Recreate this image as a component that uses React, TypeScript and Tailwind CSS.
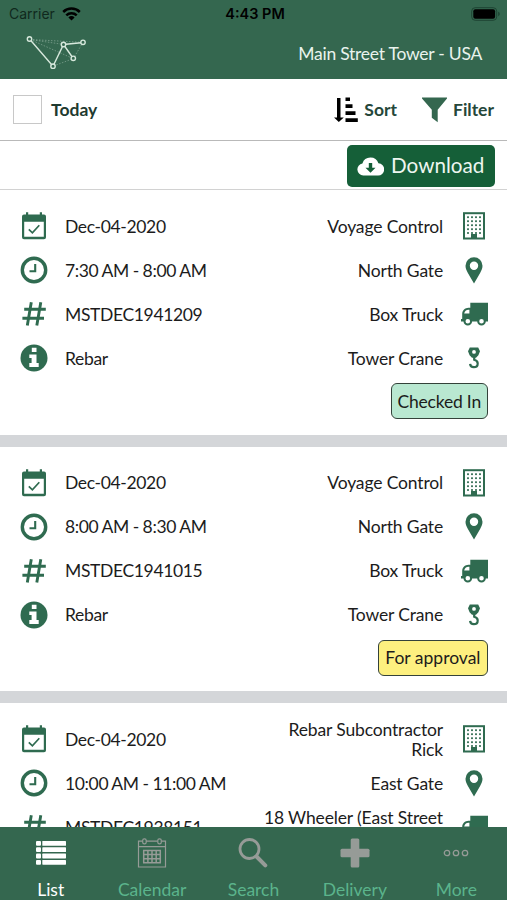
import type { ReactNode } from "react";

type Delivery = {
  date: string;
  time: string;
  code: string;
  material: string;
  company: string;
  gate: string;
  vehicle: string;
  equipment: string;
  status: "Checked In" | "For approval";
};

const DELIVERIES: Delivery[] = [
  {
    date: "Dec-04-2020",
    time: "7:30 AM - 8:00 AM",
    code: "MSTDEC1941209",
    material: "Rebar",
    company: "Voyage Control",
    gate: "North Gate",
    vehicle: "Box Truck",
    equipment: "Tower Crane",
    status: "Checked In",
  },
  {
    date: "Dec-04-2020",
    time: "8:00 AM - 8:30 AM",
    code: "MSTDEC1941015",
    material: "Rebar",
    company: "Voyage Control",
    gate: "North Gate",
    vehicle: "Box Truck",
    equipment: "Tower Crane",
    status: "For approval",
  },
  {
    date: "Dec-04-2020",
    time: "10:00 AM - 11:00 AM",
    code: "MSTDEC1938151",
    material: "Rebar",
    company: "Rebar Subcontractor Rick",
    gate: "East Gate",
    vehicle: "18 Wheeler (East Street Only)",
    equipment: "Tower Crane",
    status: "For approval",
  },
];

function CalendarCheckIcon() {
  return (
    <svg width="28" height="28" viewBox="0 0 28 28" fill="none">
      <path
        fill="currentColor"
        fillRule="evenodd"
        d="M6 .3h2.200v2.200h11.600V.3H22v2.200h2a2 2 0 0 1 2 2v20.700a2 2 0 0 1-2 2H4a2 2 0 0 1-2-2V4.500a2 2 0 0 1 2-2h2zM4.200 9.800v15h19.600v-15z"
      />
      <path d="M8.800 17.400l3.600 3.500 6.900-7.600" stroke="currentColor" strokeWidth="1.700" />
    </svg>
  );
}

function ClockIcon() {
  return (
    <svg width="28" height="28" viewBox="0 0 28 28" fill="none" stroke="currentColor">
      <circle cx="14" cy="14" r="11.700" strokeWidth="3.400" />
      <path d="M15.200 8v7.200H9.500" strokeWidth="2.100" />
    </svg>
  );
}

function HashIcon() {
  return (
    <svg width="28" height="28" viewBox="0 0 28 28" fill="none" stroke="currentColor" strokeWidth="2.900">
      <path d="M11.300 2.300L7.300 25.500M20.800 2.300l-4 23.200M4.200 9.200h21.600M2.400 18.300H24" />
    </svg>
  );
}

function InfoIcon() {
  return (
    <svg width="28" height="28" viewBox="0 0 28 28">
      <circle cx="14" cy="14" r="13.500" fill="currentColor" />
      <path fill="#fff" d="M11.800 3.800h4.700v4.300h-4.700zM9.300 10.400h7.200v8.700h2.200v3.800H9.300v-3.800h2.300v-5H9.300z" />
    </svg>
  );
}

function BuildingIcon() {
  const rows = [5.2, 9.2, 13.2, 17.2, 21];
  const cols = [5, 9, 13, 17];
  return (
    <svg width="22" height="28" viewBox="0 0 22 28">
      <rect x="1" y="1.200" width="20" height="25.300" fill="none" stroke="currentColor" strokeWidth="2" />
      {rows.map((y) =>
        cols.map((x) => <rect key={`${x}-${y}`} x={x - 0.9} y={y - 0.9} width="1.8" height="1.8" fill="currentColor" />)
      )}
      <path fill="currentColor" d="M8 22h6v5H8z" />
    </svg>
  );
}

function PinIcon() {
  return (
    <svg width="18" height="27" viewBox="0 0 18 27">
      <path
        fill="currentColor"
        fillRule="evenodd"
        d="M9 .3a8.500 8.500 0 0 1 8.500 8.500c0 2.800-1.100 4.900-2.500 7.400L9 26.500 3 16.200C1.600 13.700.5 11.600.5 8.800A8.500 8.500 0 0 1 9 .3zm0 4.200a4.200 4.200 0 1 0 0 8.400 4.200 4.200 0 0 0 0-8.400z"
      />
    </svg>
  );
}

function TruckIcon() {
  return (
    <svg width="27" height="24" viewBox="0 0 27 24">
      <path
        fill="currentColor"
        fillRule="evenodd"
        d="M9.300.8H27V19.500H0v-2.600h1.200V12c0-3.300 2.800-6.200 6.300-6.200h1.800zM3.200 11.500h5.200V7.800h-.9c-2.300 0-3.900 1.500-4.300 3.700z"
      />
      <circle cx="6.800" cy="19.200" r="3.300" fill="#fff" stroke="currentColor" strokeWidth="2" />
      <circle cx="20.500" cy="19.200" r="3.300" fill="#fff" stroke="currentColor" strokeWidth="2" />
    </svg>
  );
}

function HookIcon() {
  return (
    <svg width="14" height="22" viewBox="0 0 14 22">
      <path
        fill="currentColor"
        fillRule="evenodd"
        d="M2.800.5h8.400L13 4.200l-1.600 4L9 10.800H5L2.600 8.200 1 4.200zM7 3a1.900 1.900 0 1 0 0 3.800A1.900 1.900 0 0 0 7 3z"
      />
      <path
        d="M7.200 10v2.700c2.300.6 3.500 1.900 3.500 3.700 0 2.300-1.700 3.800-3.900 3.800-2 0-3.500-1.300-3.700-3.300"
        fill="none"
        stroke="currentColor"
        strokeWidth="2.200"
      />
    </svg>
  );
}

function Logo() {
  return (
    <svg width="62" height="36" viewBox="0 0 62 36" fill="none" stroke="#d7e8dc">
      <g strokeWidth=".7" strokeDasharray="1.500 1.500" opacity=".5">
        <path d="M5 4.500l53 2.800M5 4.500l34 5M5 4.500l43 19M28.500 31l20-7.500M58 7.300l-9.500 16" />
      </g>
      <path d="M4.500 4L28 31.200 38.500 9.500l20-2M38.500 9.500l9.800 14" strokeWidth="1.400" />
      <g fill="#34674f" strokeWidth="1.400">
        <circle cx="4.500" cy="4" r="2.200" />
        <circle cx="28" cy="31.200" r="2.200" />
        <circle cx="38.500" cy="9.500" r="2.200" />
        <circle cx="58" cy="7.300" r="2.200" />
        <circle cx="48.300" cy="23.300" r="2.200" />
      </g>
    </svg>
  );
}

function WifiIcon() {
  return (
    <svg width="19" height="14" viewBox="0 0 19 14" fill="none" stroke="#000" strokeWidth="2.500">
      <path d="M1.200 5a11.800 11.800 0 0 1 16.600 0M4.300 8.300a7.400 7.400 0 0 1 10.400 0" />
      <path d="M9.500 13.500L6.400 10.400a4.400 4.400 0 0 1 6.200 0z" fill="#000" stroke="none" />
    </svg>
  );
}

function BatteryIcon() {
  return (
    <svg width="30" height="14" viewBox="0 0 30 14">
      <rect x=".7" y=".7" width="25" height="12.600" rx="3.500" fill="none" stroke="#1e4433" strokeWidth="1" />
      <rect x="2.300" y="2.300" width="21.800" height="9.400" rx="2" fill="#000" />
      <path d="M27.200 4.800c2 .6 2 3.800 0 4.400z" fill="#1e4433" />
    </svg>
  );
}

function SortIcon() {
  return (
    <svg width="24" height="26" viewBox="0 0 24 26" fill="#000">
      <path d="M3 1h3.500v19.500h3.300L4.800 25 0 20.500h3z" />
      <path d="M11.500 0.500H16v3.400h-4.500zM11.500 7.300h7v3.600h-7zM11.500 14.300h10v3.600h-10zM11.500 21.300h12.300v3.600H11.500z" />
    </svg>
  );
}

function FunnelIcon() {
  return (
    <svg width="25" height="26" viewBox="0 0 25 26">
      <path fill="#34674f" d="M0 .5h25v1L15.700 12.700V25.300L9.800 20.700v-8L0 1.500z" />
    </svg>
  );
}

function CloudDownloadIcon() {
  return (
    <svg width="27" height="19" viewBox="0 0 27 19">
      <path fill="#fff" d="M6.300 18.500a6.100 6.100 0 0 1-.9-12.100 8.400 8.400 0 0 1 16-.1A6.100 6.100 0 0 1 20.800 18.500z" />
      <path fill="#155f38" d="M11.800 6h3.400v4.800h3.300l-5 4.900-5-4.900h3.300z" />
    </svg>
  );
}

function ListIcon() {
  return (
    <svg width="30" height="24" viewBox="0 0 30 24" fill="#fff">
      {[0, 6.3, 12.6, 18.9].map((y) => (
        <g key={y}>
          <rect x="0" y={y} width="5" height="4.800" rx="1" />
          <rect x="6.300" y={y} width="23.700" height="4.800" rx=".6" />
        </g>
      ))}
    </svg>
  );
}

function CalendarGridIcon() {
  return (
    <svg width="30" height="30" viewBox="0 0 30 30" fill="none" stroke="#969b97" strokeWidth="1.200">
      <path d="M5.500 3.200H1.500V29h27V3.200h-4M9 3.200h11.500M1.500 8.700h27" />
      <rect x="5.700" y=".8" width="3.500" height="5" rx="1.600" />
      <rect x="20.800" y=".8" width="3.500" height="5" rx="1.600" />
      <path
        d="M6 12.500h18M6 16.600h18M6 20.700h18M6 24.800h18M6.700 12.500v12.300M10.900 12.500v12.300M15 12.500v12.300M19.200 12.500v12.300M23.300 12.500v12.300"
        strokeWidth="1.500"
      />
    </svg>
  );
}

function SearchIcon() {
  return (
    <svg width="30" height="30" viewBox="0 0 30 30" fill="none" stroke="#969b97">
      <circle cx="11.500" cy="11" r="9.500" strokeWidth="2.800" />
      <path d="M18.500 18.500l8.800 8.800" strokeWidth="4" strokeLinecap="round" />
    </svg>
  );
}

function PlusIcon() {
  return (
    <svg width="30" height="30" viewBox="0 0 30 30" fill="#969b97">
      <rect x="10.700" y=".5" width="8.600" height="29" rx="1.500" />
      <rect x=".5" y="10.700" width="29" height="8.600" rx="1.500" />
    </svg>
  );
}

function MoreIcon() {
  return (
    <svg width="26" height="10" viewBox="0 0 26 10" fill="none" stroke="#969b97" strokeWidth="1.300">
      <circle cx="4" cy="5" r="2.700" />
      <circle cx="13" cy="5" r="2.700" />
      <circle cx="22" cy="5" r="2.700" />
    </svg>
  );
}

function Row({
  leftIcon,
  left,
  right,
  rightIcon,
}: {
  leftIcon: ReactNode;
  left: string;
  right: string;
  rightIcon: ReactNode;
}) {
  return (
    <div className="flex h-11 items-center text-[17.5px] leading-5 text-[#1c1c1c]">
      <span className="flex w-7 shrink-0 justify-center text-[#2f6b50]">{leftIcon}</span>
      <span className="ml-[17px] flex-1 pt-px tracking-[-0.35px] whitespace-nowrap [word-spacing:-0.4px]">{left}</span>
      <span className="w-[185px] pt-px text-right tracking-[-0.15px]">{right}</span>
      <span className="ml-[17px] flex w-7 shrink-0 justify-center text-[#2f6b50]">{rightIcon}</span>
    </div>
  );
}

function DeliveryCard({ delivery }: { delivery: Delivery }) {
  return (
    <div className="h-[256.5px] shrink-0 border-b-[12px] border-[#d4d6d9] bg-white pt-[14px] pr-[19px] pl-5">
      <Row leftIcon={<CalendarCheckIcon />} left={delivery.date} right={delivery.company} rightIcon={<BuildingIcon />} />
      <Row leftIcon={<ClockIcon />} left={delivery.time} right={delivery.gate} rightIcon={<PinIcon />} />
      <Row leftIcon={<HashIcon />} left={delivery.code} right={delivery.vehicle} rightIcon={<TruckIcon />} />
      <Row leftIcon={<InfoIcon />} left={delivery.material} right={delivery.equipment} rightIcon={<HookIcon />} />
      <div className="mt-[3px] flex justify-end">
        <span
          className={`flex h-9 items-center rounded-md border-[1.5px] border-[#34423a] pt-0.5 text-[17.5px] text-[#1c1c1c] ${
            delivery.status === "Checked In" ? "bg-[#b9e8d1] px-[6px] tracking-[-0.2px]" : "bg-[#fdf07f] px-[6.5px]"
          }`}
        >
          {delivery.status}
        </span>
      </div>
    </div>
  );
}

const TABS = [
  { label: "List", icon: <ListIcon />, active: true },
  { label: "Calendar", icon: <CalendarGridIcon />, active: false },
  { label: "Search", icon: <SearchIcon />, active: false },
  { label: "Delivery", icon: <PlusIcon />, active: false },
  { label: "More", icon: <MoreIcon />, active: false },
];

export default function App() {
  return (
    <div className="flex h-[900px] w-[507px] flex-col overflow-hidden bg-white font-['Lato',sans-serif]">
      {/* Status bar + header */}
      <header className="h-[79px] shrink-0 bg-[#34674f]">
        <div className="grid h-[27px] grid-cols-3 items-center pr-[6px] pl-[9px] font-['Inter',sans-serif] text-[13.5px] text-black">
          <span className="flex items-center gap-[6px] text-[#10291d]">
            <span className="w-[47px] text-[14px]">Carrier</span>
            <WifiIcon />
          </span>
          <span className="text-center text-[14.5px] font-semibold">4:43 PM</span>
          <span className="flex justify-end">
            <BatteryIcon />
          </span>
        </div>
        <div className="flex h-[52px] items-center justify-between pr-[25px] pl-[25px]">
          <Logo />
          <h1 className="pt-[3px] text-[17.5px] tracking-[-0.25px] text-[#e9f3ed]">Main Street Tower - USA</h1>
        </div>
      </header>

      {/* Toolbar */}
      <div className="flex h-[62px] shrink-0 items-center border-b border-[#b9b9b9] pr-[13px] pl-[13px] text-[17.5px] font-bold text-[#25473a]">
        <span className="size-[29px] border-[1.5px] border-[#c8c8c8]" />
        <span className="ml-[9px] flex-1 pt-0.5 text-[#1f3a30]">Today</span>
        <SortIcon />
        <span className="ml-[6px] pt-0.5">Sort</span>
        <span className="ml-[25px]">
          <FunnelIcon />
        </span>
        <span className="ml-[6px] pt-0.5">Filter</span>
      </div>
      <div className="flex h-[49px] shrink-0 items-center justify-end border-b border-[#d2d2d2] pt-0.5 pr-[12px]">
        <button className="flex h-[42px] w-[148px] items-center gap-[7px] rounded-[5px] bg-[#155f38] pl-[10px] text-[20.7px] text-[#eef6f0]">
          <CloudDownloadIcon />
          Download
        </button>
      </div>

      {/* Delivery list */}
      <main className="flex min-h-0 flex-1 flex-col overflow-hidden">
        {DELIVERIES.map((d) => (
          <DeliveryCard key={d.code} delivery={d} />
        ))}
      </main>

      {/* Bottom tabs */}
      <nav className="grid h-[73px] shrink-0 grid-cols-5 bg-[#34674f]">
        {TABS.map((tab) => (
          <div
            key={tab.label}
            className={`flex flex-col items-center text-[17.5px] ${tab.active ? "text-white" : "text-[#5bb48c]"}`}
          >
            <span className="flex h-[51px] items-center">{tab.icon}</span>
            <span className="pt-px leading-[21px]">{tab.label}</span>
          </div>
        ))}
      </nav>
    </div>
  );
}
